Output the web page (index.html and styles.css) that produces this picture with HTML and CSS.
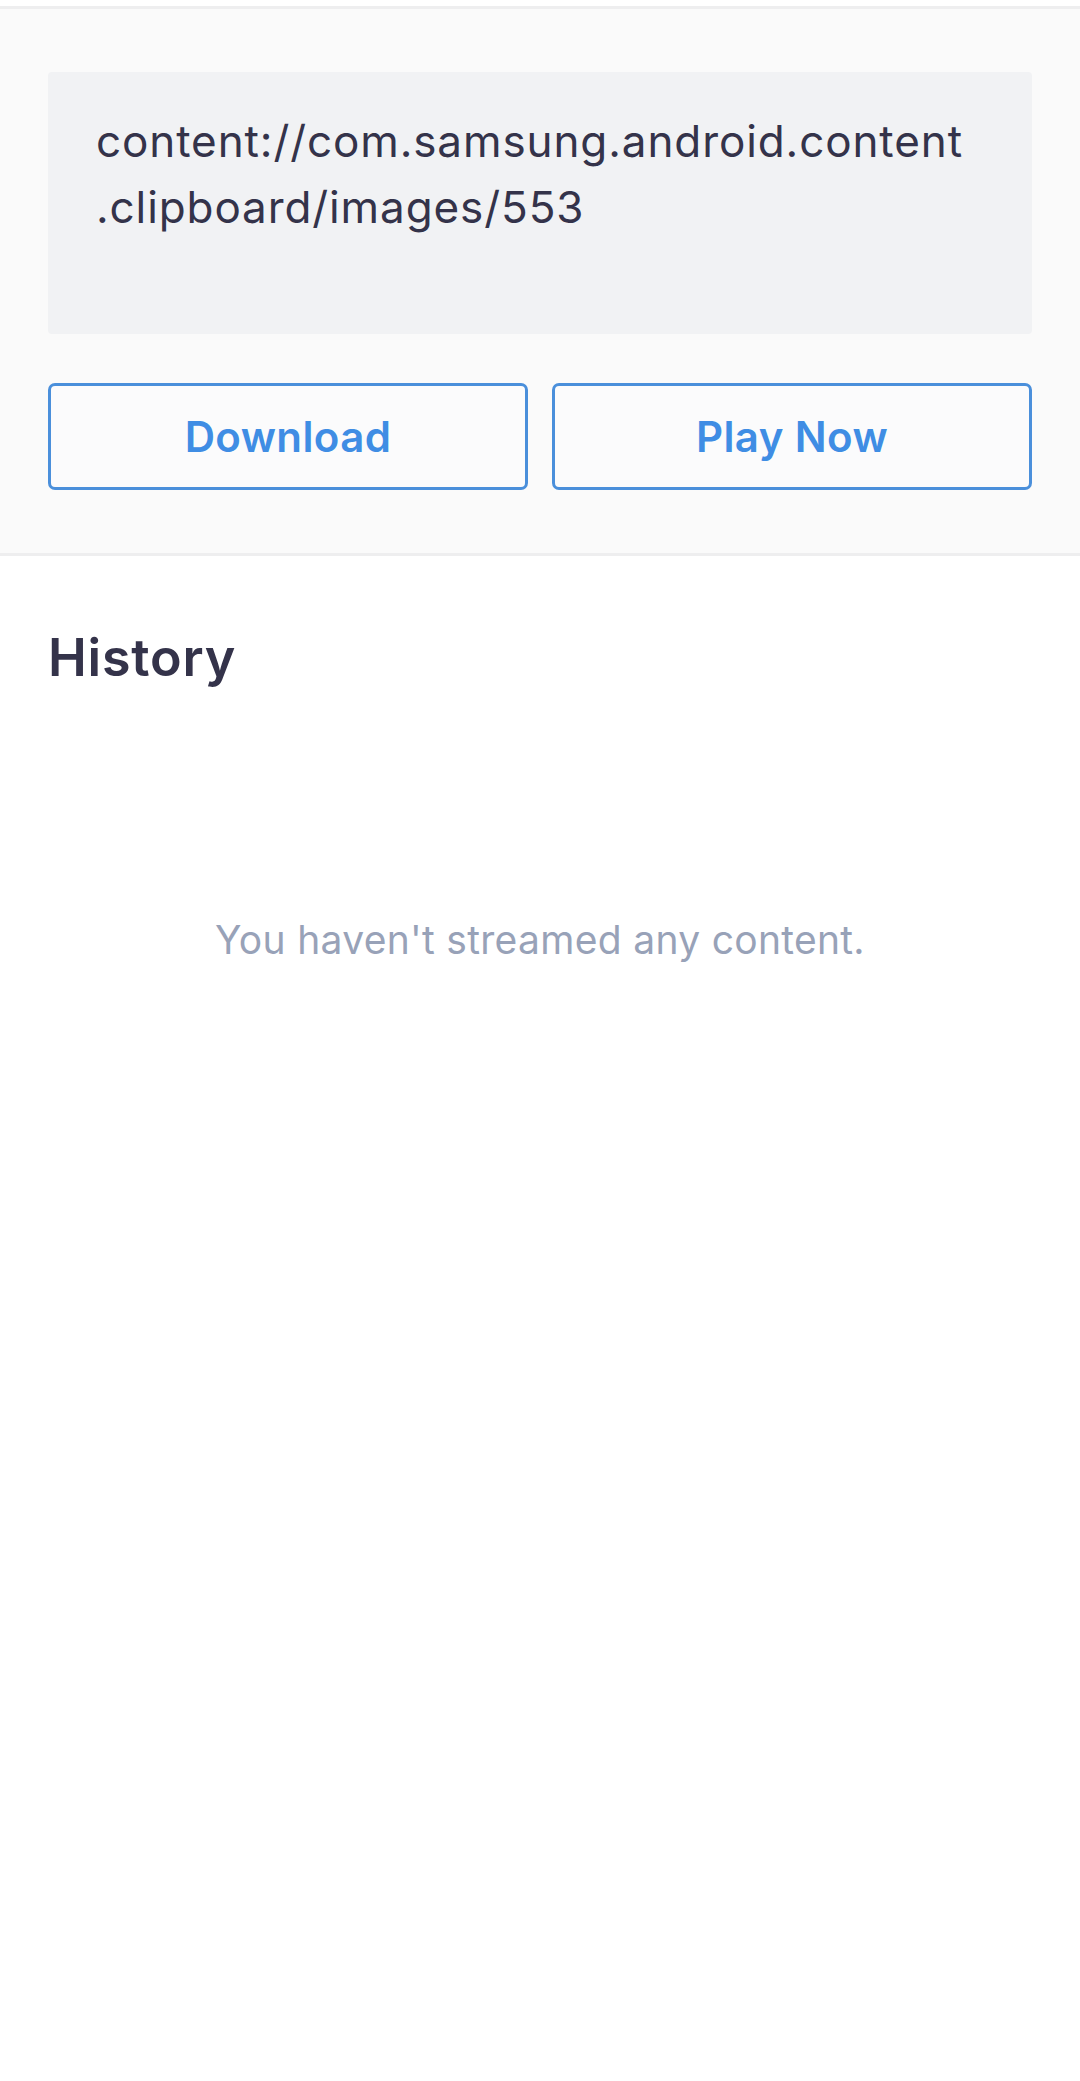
FILE: index.html
```html
<!DOCTYPE html>
<html>
<head>
<meta charset="utf-8">
<link rel="stylesheet" href="styles.css">
</head>
<body>
<div class="topgap"></div>
<section class="panel">
  <div class="urlbox">content://com.samsung.android.content<br>.clipboard/images/553</div>
  <div class="actions">
    <button class="btn">Download</button>
    <button class="btn">Play Now</button>
  </div>
</section>
<section class="history">
  <h2 class="history-title">History</h2>
  <p class="empty">You haven't streamed any content.</p>
</section>
</body>
</html>
```
FILE: styles.css
```css
* { box-sizing: border-box; }
html, body { margin: 0; padding: 0; background: #ffffff; }
body {
  width: 1080px;
  height: 2081px;
  font-family: Inter, "Noto Sans", sans-serif;
  color: #34334a;
}
.topgap { height: 6px; background: #ffffff; }
.panel {
  background: #fafafa;
  border-top: 3px solid #eeeeef;
  border-bottom: 3px solid #eeeeef;
  padding: 63px 48px 63px 48px;
}
.urlbox {
  background: #f1f2f4;
  border-radius: 4px;
  height: 262px;
  padding: 36px 48px 0 48px;
  font-size: 44px;
  line-height: 66px;
  color: #34334a;
  letter-spacing: 0.9px;
}
.actions {
  display: flex;
  gap: 24px;
  margin-top: 49px;
}
.btn {
  flex: 1;
  height: 107px;
  background: #fbfbfc;
  border: 3px solid #4a8fdb;
  border-radius: 7px;
  font-family: Inter, "Noto Sans", sans-serif;
  font-size: 42px;
  font-weight: 600;
  letter-spacing: 0.4px;
  color: #3f8de4;
  padding: 0;
}
.history { padding: 0 48px; }
.history-title {
  margin: 0;
  padding-top: 70px;
  font-size: 52px;
  line-height: 64px;
  font-weight: 600;
  letter-spacing: 0.8px;
  color: #34334a;
}
.empty {
  margin: 225px 0 0 0;
  text-align: center;
  font-size: 39px;
  line-height: 50px;
  letter-spacing: 0.3px;
  color: #98a2b8;
}
```
